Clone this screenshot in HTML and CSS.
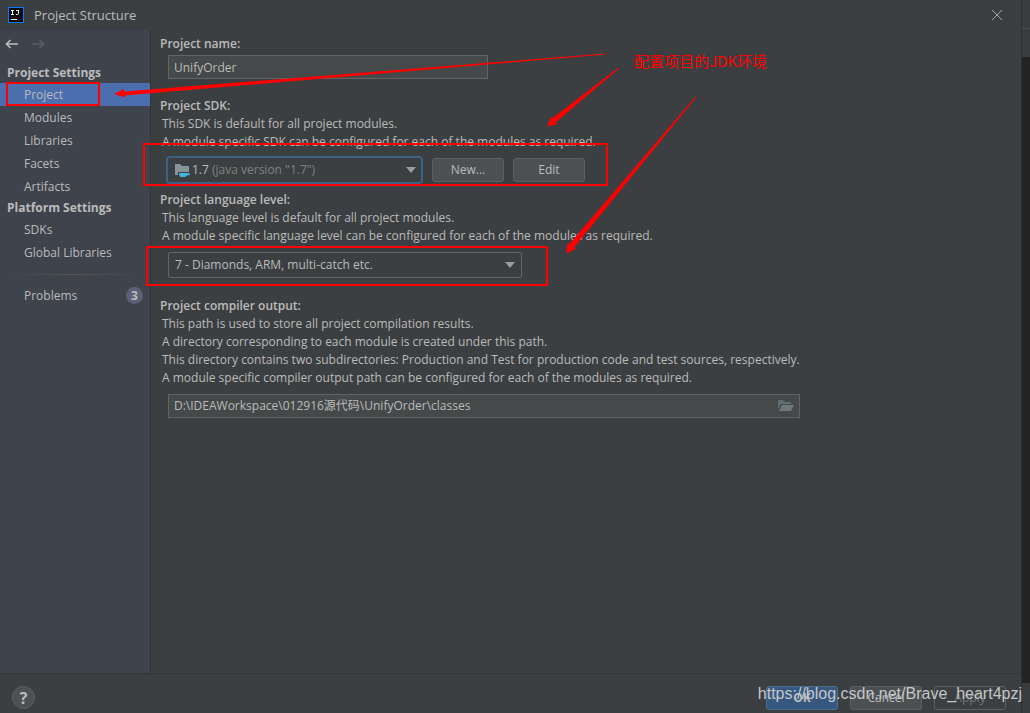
FILE: index.html
```html
<!DOCTYPE html>
<html lang="en">
<head>
  <meta charset="UTF-8" />
  <meta name="viewport" content="width=device-width, initial-scale=1.0"/>
  <title>Project Structure</title>
  <link rel="stylesheet" href="styles.css">
</head>
<body>
  <div class="dialog">
    <header class="titlebar">
      <svg class="logo" width="16" height="16" viewBox="0 0 16 16" aria-hidden="true">
        <rect x="0.5" y="0.5" width="15" height="15" fill="#0b0b0d" stroke="#087cfa"/>
        <path d="M3 3.500h3M4.500 3.500v4M3 7.500h3M8 3.500h3M10.500 3.500v3q0 1-1 1H8M3 12.500h6" fill="none" stroke="#fff"/>
      </svg>
      <h1>Project Structure</h1>
      <button class="icon-button close" aria-label="Close">
        <svg width="12" height="12" viewBox="0 0 12 12"><path d="M1 1l10 10M11 1L1 11" stroke="#a4a6a8"/></svg>
      </button>
    </header>

    <div class="content">
      <nav class="sidebar">
        <div class="history">
          <button class="icon-button" aria-label="Back">
            <svg width="14" height="10" viewBox="0 0 14 10"><path d="M13 5H1.500M5.500 1l-4 4 4 4" fill="none" stroke="#bcbec0" stroke-width="1.600"/></svg>
          </button>
          <button class="icon-button" aria-label="Forward" disabled>
            <svg width="14" height="10" viewBox="0 0 14 10"><path d="M1 5h11.500M8.500 1l4 4-4 4" fill="none" stroke="#5b5d61" stroke-width="1.600"/></svg>
          </button>
        </div>
        <h2>Project Settings</h2>
        <a href="#project" class="active">Project</a>
        <a href="#modules">Modules</a>
        <a href="#libraries">Libraries</a>
        <a href="#facets">Facets</a>
        <a href="#artifacts">Artifacts</a>
        <h2>Platform Settings</h2>
        <a href="#sdks">SDKs</a>
        <a href="#global">Global Libraries</a>
        <hr>
        <a href="#problems">Problems <span class="count">3</span></a>
      </nav>

      <main>
        <section>
          <label for="name">Project name:</label>
          <input id="name" class="field name" type="text" value="UnifyOrder">
        </section>

        <section class="sdk">
          <label for="sdk">Project SDK:</label>
          <p>This SDK is default for all project modules.</p>
          <p>A module specific SDK can be configured for each of the modules as required.</p>
          <div class="sdk-row">
            <div class="combo sdk-combo">
              <select id="sdk"><option>1.7</option></select>
              <svg class="jdk" width="16" height="16" viewBox="0 0 16 16" aria-hidden="true">
                <path d="M1 1h5l2 2h7v9H1z" fill="#87939a"/>
                <path d="M4 9h12v4H4z" fill="#3c3f41"/>
                <path d="M5 10h8.500q2.500 0 2.500 1.200T13 12.600Q12 14 10.500 14h-3Q5 14 5 10z" fill="#40b6e0"/>
              </svg>
              <span class="version">(java version "1.7")</span>
              <svg class="arrow" width="10" height="6" viewBox="0 0 10 6"><path d="M0 0h10L5 6z"/></svg>
            </div>
            <button class="button">New...</button>
            <button class="button">Edit</button>
          </div>
        </section>

        <section class="level">
          <label for="level">Project language level:</label>
          <p>This language level is default for all project modules.</p>
          <p>A module specific language level can be configured for each of the modules as required.</p>
          <div class="combo level-combo">
            <select id="level"><option>7 - Diamonds, ARM, multi-catch etc.</option></select>
            <svg class="arrow" width="10" height="6" viewBox="0 0 10 6"><path d="M0 0h10L5 6z"/></svg>
          </div>
        </section>

        <section class="output">
          <label for="output">Project compiler output:</label>
          <p>This path is used to store all project compilation results.</p>
          <p>A directory corresponding to each module is created under this path.</p>
          <p>This directory contains two subdirectories: Production and Test for production code and test sources, respectively.</p>
          <p>A module specific compiler output path can be configured for each of the modules as required.</p>
          <div class="field path">
            <input id="output" type="text" value="D:\IDEAWorkspace\012916源代码\UnifyOrder\classes">
            <button class="icon-button" aria-label="Browse">
              <svg width="16" height="12" viewBox="0 0 16 12"><path d="M0 0h5l2 2h6v2H3L0 9z" fill="#626c71"/><path d="M4 5h12l-3 6H1z" fill="#6d777c"/></svg>
            </button>
          </div>
        </section>
      </main>
    </div>

    <footer>
      <button class="help" aria-label="Help">?</button>
      <button class="button primary">OK</button>
      <button class="button">Cancel</button>
      <button class="button" disabled>Apply</button>
    </footer>
  </div>
  <div class="backdrop"></div>

  <svg class="marks" width="820" height="300" viewBox="0 0 820 300" aria-hidden="true">
    <g fill="none" stroke="#f00" stroke-width="2">
      <rect x="7" y="83" width="92" height="22"/>
      <rect x="144" y="144" width="463" height="41"/>
      <rect x="147" y="247" width="400" height="38"/>
    </g>
    <g fill="#f00">
      <path d="M605 53.500L124 91.500 124 89 114 94 125 97.500 124.500 95.500 605 54.500z"/>
      <path d="M618.500 67.500L552 118.500 551 116.500 547 126.500 557.500 124 555.500 122.500 619 68.500z"/>
      <path d="M695.500 96.500L569 244.500 567.500 242.500 566 253.500 576 249 574 247.500 696 97.500z"/>
    </g>
  </svg>
  <div class="note">配置项目的JDK环境</div>
  <div class="watermark">https://blog.csdn.net/Brave_heart4pzj</div>
</body>
</html>
```
FILE: styles.css
```css
* {
  box-sizing: border-box;
}
body {
  margin: 0;
  min-height: 100vh;
  position: relative;
  display: flex;
  background: #3c3f41;
  color: #bbb;
  font: 12px/18px "Open Sans", "Noto Sans CJK SC", sans-serif;
  overflow: hidden;
}
.dialog {
  flex: 1;
  display: flex;
  flex-direction: column;
}
.backdrop {
  width: 9px;
  border-left: 1px solid #2d2f30;
  background: linear-gradient(#3a3c3e 28px, #4b4d4f 28px, #4b4d4f 29px, #3a3c3e 29px, #3a3c3e 57px, #232323 57px, #232323 683px, #3a3c3e 683px);
}
button,
input,
select {
  font: inherit;
  color: inherit;
}
.icon-button {
  display: flex;
  padding: 0;
  border: 0;
  background: none;
}
.titlebar {
  height: 30px;
  padding: 0 18px 0 8px;
  display: flex;
  align-items: center;
}
h1 {
  flex: 1;
  margin: 0 0 0 10px;
  font-size: 13px;
  font-weight: 400;
}
.content {
  flex: 1;
  display: flex;
}

/* sidebar */
.sidebar {
  width: 151px;
  background: #3e434c;
  border-right: 1px solid #323435;
}
.history {
  height: 33px;
  padding: 9px 5px;
  display: flex;
  gap: 12px;
}
h2 {
  margin: 0;
  padding-left: 7px;
  font-size: 12px;
  font-weight: 700;
  line-height: 20px;
}
.sidebar a {
  display: flex;
  justify-content: space-between;
  align-items: center;
  height: 23px;
  padding: 0 7px 0 24px;
  color: inherit;
  text-decoration: none;
}
.sidebar .active {
  background: #4b6eaf;
}
.sidebar hr {
  height: 1px;
  margin: 10px 8px 9px;
  border: 0;
  background: linear-gradient(90deg, transparent, #55544f, transparent);
}
.count {
  width: 17px;
  border-radius: 9px;
  background: #5b6175;
  font-weight: 700;
  line-height: 17px;
  text-align: center;
}

/* settings */
main {
  flex: 1;
  padding: 5px 9px;
}
label {
  display: block;
  font-weight: 600;
}
p {
  margin: 0 0 0 2px;
}
.field {
  height: 24px;
  margin-left: 8px;
  padding: 0 5px;
  border: 1px solid #646464;
  background: #45494a;
}
.name {
  display: block;
  width: 320px;
  margin-top: 2px;
}
.sdk {
  margin-top: 18px;
}
.sdk-row {
  display: flex;
  align-items: center;
  gap: 9px;
  margin: 5px 0 7px 6px;
}
.combo {
  position: relative;
  height: 26px;
}
.combo select {
  width: 100%;
  height: 100%;
  padding: 0 6px;
  appearance: none;
  border: 1px solid #646464;
  border-radius: 2px;
  background: #3c3f41;
}
.sdk-combo {
  width: 257px;
  height: 28px;
}
.sdk-combo select {
  padding-left: 24px;
  border: 2px solid #3d6185;
  border-radius: 4px;
}
.jdk {
  position: absolute;
  left: 8px;
  top: 7px;
}
.version {
  position: absolute;
  left: 46px;
  top: 5px;
  color: #808080;
  pointer-events: none;
}
.arrow {
  position: absolute;
  right: 7px;
  top: 50%;
  margin-top: -3px;
  fill: #9a9da0;
  pointer-events: none;
}
.button {
  width: 72px;
  height: 24px;
  padding: 0;
  border: 1px solid #5e6060;
  border-radius: 3px;
  background: #4c5052;
}
.level-combo {
  width: 354px;
  margin: 7px 0 0 8px;
}
.output {
  margin-top: 19px;
}
.path {
  display: flex;
  align-items: center;
  width: 632px;
  margin-top: 7px;
}
.path input {
  flex: 1;
  padding: 0;
  border: 0;
  background: none;
}

/* footer */
footer {
  height: 40px;
  padding: 8px 15px 0 12px;
  display: flex;
  align-items: center;
  gap: 12px;
  border-top: 1px solid #323435;
}
.help {
  width: 23px;
  height: 23px;
  margin-right: auto;
  padding: 0;
  border: 1px solid #5e6060;
  border-radius: 50%;
  background: #4c5052;
  font: 700 16px/20px "Open Sans", sans-serif;
}
.primary {
  border-color: #4c708c;
  background: #365880;
  font-weight: 700;
}
.button:disabled {
  background: none;
  color: #777;
}

/* annotations */
.marks {
  position: absolute;
  left: 0;
  top: 0;
  pointer-events: none;
}
.note {
  position: absolute;
  left: 634px;
  top: 49px;
  color: #f00;
  font: 15px/24px "Noto Sans CJK SC", sans-serif;
}
.watermark {
  position: absolute;
  right: 8px;
  bottom: 8px;
  color: #c4c6c7;
  font: 16px/22px "Liberation Sans", sans-serif;
  pointer-events: none;
}
```
